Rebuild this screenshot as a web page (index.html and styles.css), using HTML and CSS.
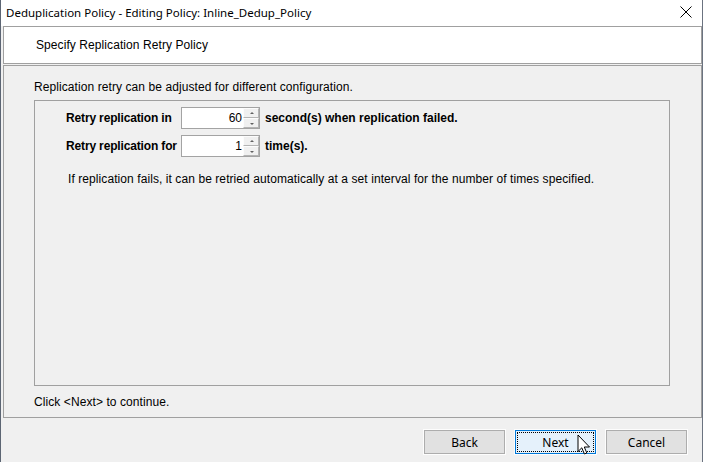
FILE: index.html
```
<!DOCTYPE html>
<html>
<head>
<meta charset="utf-8">
<link rel="stylesheet" href="styles.css">
</head>
<body>
<div class="window">
  <div class="titlebar">
    <span class="title">Deduplication Policy - Editing Policy: Inline_Dedup_Policy</span>
    <svg class="close" width="12" height="12" viewBox="0 0 12 12"><path d="M0.5 0.5L11.5 11.5M11.5 0.5L0.5 11.5" stroke="#000" stroke-width="1" fill="none"/></svg>
  </div>
  <div class="body">
    <div class="header">Specify Replication Retry Policy</div>
    <div class="content">
      <p class="intro">Replication retry can be adjusted for different configuration.</p>
      <div class="box">
        <div class="row">
          <span class="label">Retry replication in</span>
          <div class="spin">
            <span class="value">60</span>
            <div class="arrows">
              <span class="arrow up"></span>
              <span class="arrow down"></span>
            </div>
          </div>
          <span class="suffix">second(s) when replication failed.</span>
        </div>
        <div class="row">
          <span class="label">Retry replication for</span>
          <div class="spin">
            <span class="value">1</span>
            <div class="arrows">
              <span class="arrow up"></span>
              <span class="arrow down"></span>
            </div>
          </div>
          <span class="suffix">time(s).</span>
        </div>
        <p class="desc">If replication fails, it can be retried automatically at a set interval for the number of times specified.</p>
      </div>
      <p class="hint">Click &lt;Next&gt; to continue.</p>
    </div>
    <div class="footer">
      <button class="btn">Back</button>
      <button class="btn primary"><span class="focus">Next</span>
        <svg class="cursor" width="14" height="22" viewBox="0 0 14 22"><path d="M1 1V17.5L4.8 13.8L7.4 20L9.8 19L7.3 13H12.5Z" fill="#fff" stroke="#000" stroke-width="1" stroke-linejoin="miter"/></svg>
      </button>
      <button class="btn">Cancel</button>
    </div>
  </div>
</div>
</body>
</html>
```
FILE: styles.css
```
html, body {
  margin: 0;
  padding: 0;
}
body {
  width: 703px;
  height: 462px;
  overflow: hidden;
  background: #f0f0f0;
  font-family: "Liberation Sans", Arial, sans-serif;
  font-size: 12px;
  letter-spacing: 0.08px;
  color: #000;
}
.window {
  height: 462px;
  border-left: 1px solid #5c6573;
  border-right: 1px solid #6b7380;
  box-sizing: border-box;
  display: flex;
  flex-direction: column;
}
.titlebar {
  height: 26px;
  flex: none;
  background: #fff;
  display: flex;
  align-items: center;
  justify-content: space-between;
  padding: 0 10px 0 5px;
  font-family: "Noto Sans", "Open Sans", sans-serif;
  font-size: 11.5px;
  letter-spacing: 0;
}
.title {
  position: relative;
  top: -1px;
}
.close {
  display: block;
  position: relative;
  top: -1px;
}
.body {
  flex: 1;
  display: flex;
  flex-direction: column;
  padding: 0 0 0 2px;
  background: #f0f0f0;
}
.header {
  height: 36px;
  flex: none;
  background: #fff;
  border: 1px solid #a0a0a0;
  display: flex;
  align-items: center;
  padding-left: 32px;
  margin-bottom: 1px;
}
.content {
  height: 351px;
  flex: none;
  border: 1px solid #a0a0a0;
  padding: 0 31px 0 30px;
  display: flex;
  flex-direction: column;
}
.intro {
  margin: 14px 0 6px 0;
  line-height: 14px;
}
.box {
  border: 1px solid #a0a0a0;
  height: 278px;
  padding: 6px 0 0 31px;
}
.row {
  display: grid;
  grid-template-columns: 110px 79px auto;
  column-gap: 5px;
  align-items: center;
  margin-bottom: 6px;
  height: 22px;
  font-weight: bold;
  letter-spacing: 0;
}
.label {
  white-space: nowrap;
  letter-spacing: -0.15px;
}
.spin {
  display: flex;
  width: 79px;
  height: 22px;
  box-sizing: border-box;
  border: 1px solid #a3a3a3;
  background: #fff;
}
.value {
  flex: 1;
  text-align: right;
  padding-right: 1px;
  font-weight: normal;
  line-height: 20px;
}
.arrows {
  width: 16px;
  display: flex;
  flex-direction: column;
}
.arrow {
  flex: 1;
  background: #f0f0f0;
  border: 1px solid #b4b4b4;
  border-top-color: #fcfcfc;
  border-left-color: #fcfcfc;
  position: relative;
}
.arrow::after {
  content: "";
  position: absolute;
  left: 6px;
  width: 0;
  height: 0;
  border-left: 2px solid transparent;
  border-right: 2px solid transparent;
}
.arrow.up::after {
  top: 3px;
  border-bottom: 2px solid #606060;
}
.arrow.down::after {
  top: 4px;
  border-top: 2px solid #606060;
}
.desc {
  margin: 15px 0 0 2px;
  line-height: 14px;
}
.hint {
  margin: 9px 0 0 0;
  line-height: 14px;
}
.footer {
  flex: 1;
  display: flex;
  justify-content: flex-end;
  align-items: flex-start;
  padding: 12px 15px 0 0;
  gap: 10px;
}
.btn {
  width: 81px;
  height: 24px;
  margin: 0;
  padding: 0;
  box-sizing: border-box;
  background: #e1e1e1;
  border: 1px solid #adadad;
  box-shadow: 0 0 0 1px #fdfdfd;
  font-family: "Noto Sans", "Open Sans", sans-serif;
  font-size: 12px;
  letter-spacing: 0;
  color: #000;
  position: relative;
  display: flex;
  align-items: center;
  justify-content: center;
}
.btn.primary {
  background: #e5f1fb;
  border-color: #0078d7;
  padding: 1px;
}
.focus {
  flex: 1;
  align-self: stretch;
  display: flex;
  align-items: center;
  justify-content: center;
  outline: 1px dotted #000;
  outline-offset: -1px;
}
.cursor {
  position: absolute;
  left: 61px;
  top: 3px;
}
```
